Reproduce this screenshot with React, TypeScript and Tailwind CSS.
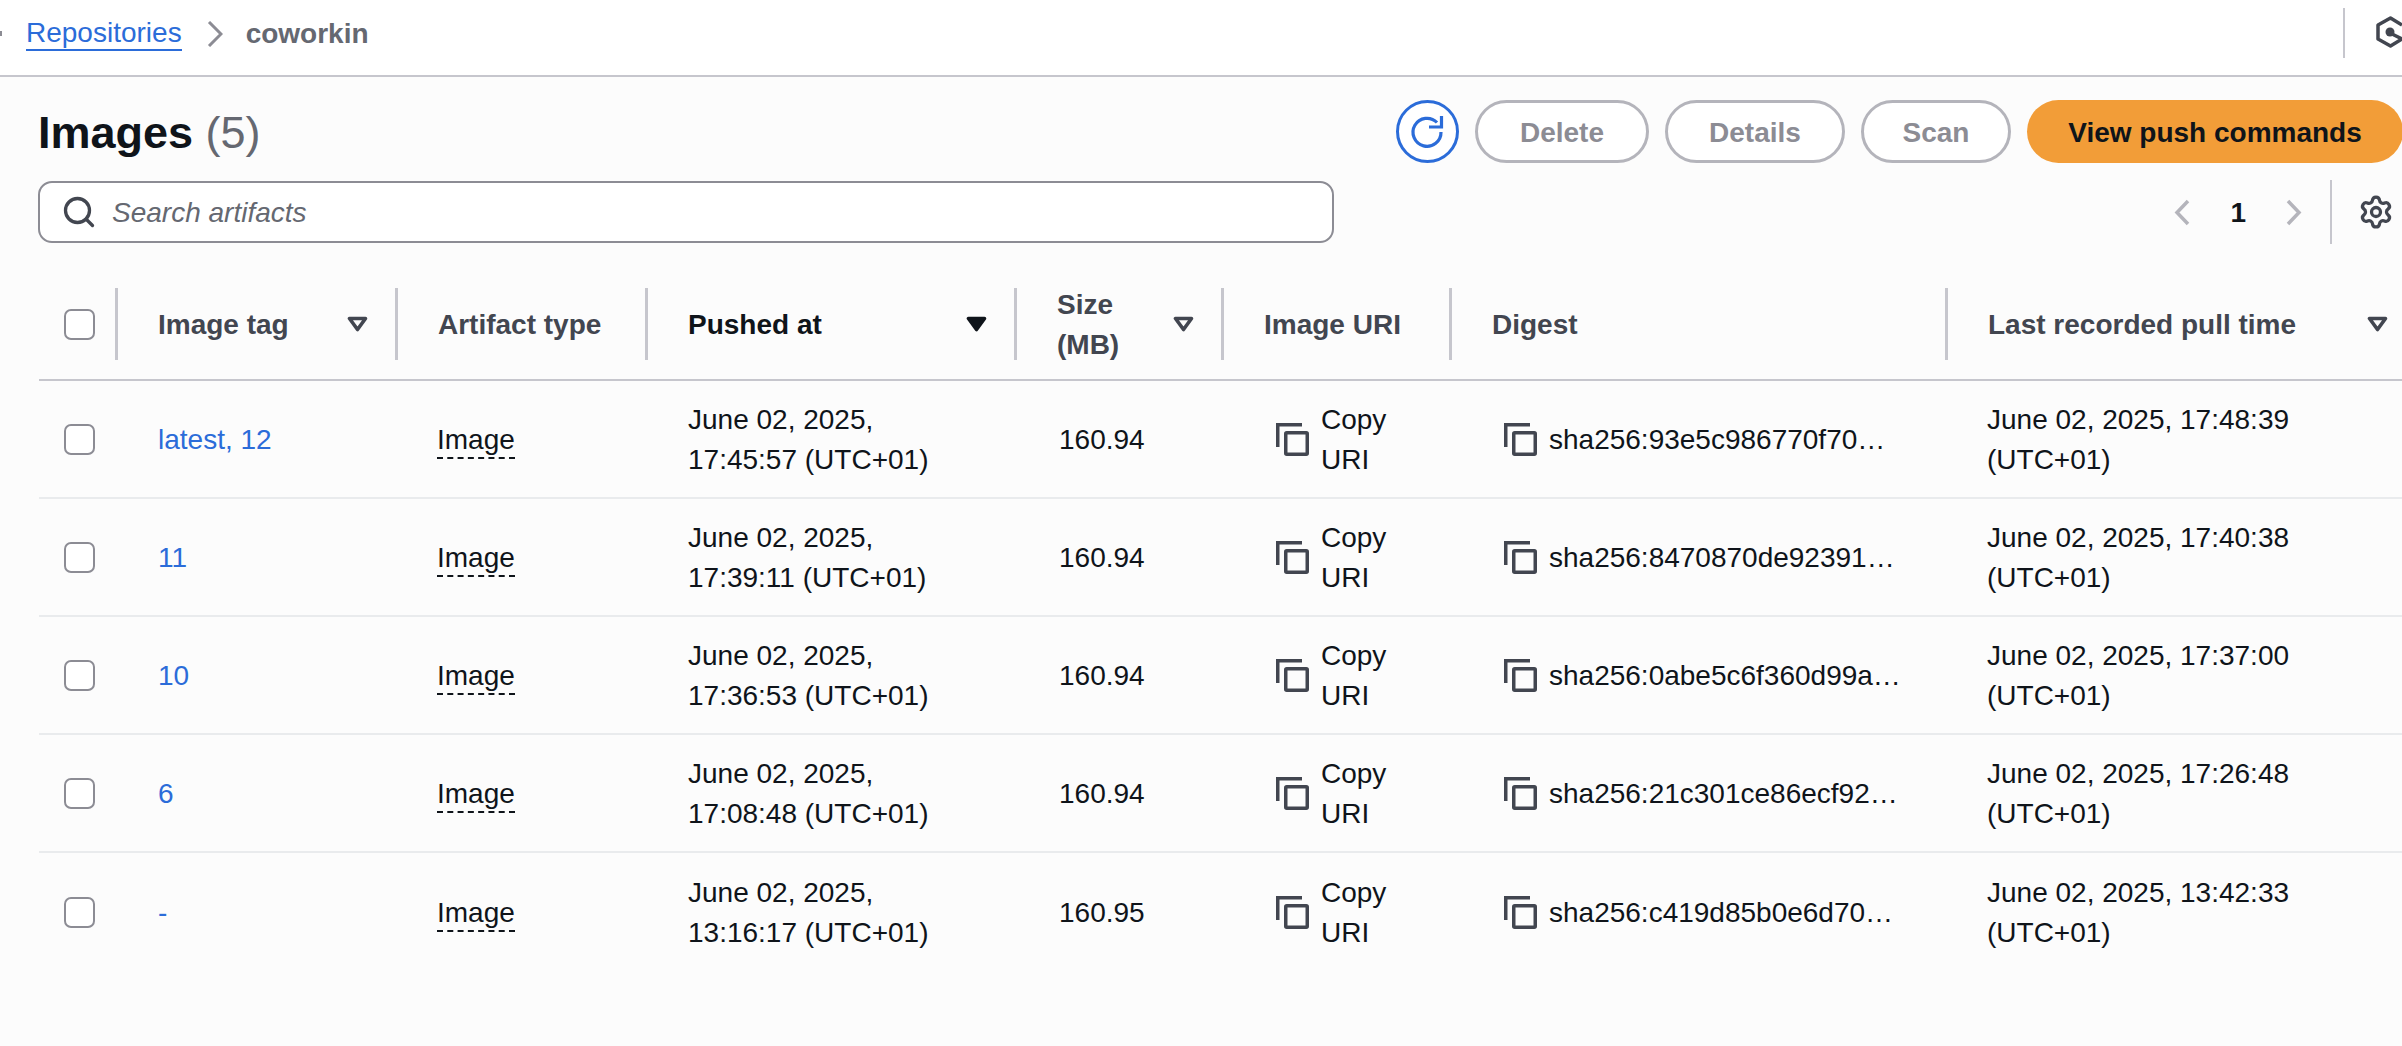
import { Search, Settings } from "lucide-react"

type Row = {
  tag: string
  pushedDate: string
  pushedTime: string
  size: string
  digest: string
  pullDate: string
  pullTime: string
}

const rows: Row[] = [
  {
    tag: "latest, 12",
    pushedDate: "June 02, 2025,",
    pushedTime: "17:45:57 (UTC+01)",
    size: "160.94",
    digest: "sha256:93e5c986770f70…",
    pullDate: "June 02, 2025, 17:48:39",
    pullTime: "(UTC+01)",
  },
  {
    tag: "11",
    pushedDate: "June 02, 2025,",
    pushedTime: "17:39:11 (UTC+01)",
    size: "160.94",
    digest: "sha256:8470870de92391…",
    pullDate: "June 02, 2025, 17:40:38",
    pullTime: "(UTC+01)",
  },
  {
    tag: "10",
    pushedDate: "June 02, 2025,",
    pushedTime: "17:36:53 (UTC+01)",
    size: "160.94",
    digest: "sha256:0abe5c6f360d99a…",
    pullDate: "June 02, 2025, 17:37:00",
    pullTime: "(UTC+01)",
  },
  {
    tag: "6",
    pushedDate: "June 02, 2025,",
    pushedTime: "17:08:48 (UTC+01)",
    size: "160.94",
    digest: "sha256:21c301ce86ecf92…",
    pullDate: "June 02, 2025, 17:26:48",
    pullTime: "(UTC+01)",
  },
  {
    tag: "-",
    pushedDate: "June 02, 2025,",
    pushedTime: "13:16:17 (UTC+01)",
    size: "160.95",
    digest: "sha256:c419d85b0e6d70…",
    pullDate: "June 02, 2025, 13:42:33",
    pullTime: "(UTC+01)",
  },
]

const gridCols =
  "grid grid-cols-[76px_280px_250px_369px_207px_228px_496px_470px]"

function CopyIcon() {
  return (
    <svg width="33" height="33" viewBox="0 0 33 33" fill="none" className="shrink-0">
      <path d="M1.75 24V1.75H26" stroke="#424650" strokeWidth="3.5" />
      <rect x="9.75" y="9.75" width="21.5" height="21.5" rx="1" stroke="#424650" strokeWidth="3.5" />
    </svg>
  )
}

function Caret({ filled = false }: { filled?: boolean }) {
  return (
    <svg width="21" height="16" viewBox="0 0 21 16" className="shrink-0">
      <path
        d="M2.5 2.5H18.5L10.5 13.5Z"
        fill={filled ? "#0f141a" : "none"}
        stroke={filled ? "#0f141a" : "#424650"}
        strokeWidth="3.6"
        strokeLinejoin="round"
      />
    </svg>
  )
}

function Chevron({ left = false }: { left?: boolean }) {
  return (
    <svg width="16" height="27" viewBox="0 0 16 27" fill="none">
      <path
        d={left ? "M14 2L3 13.5L14 25" : "M2 2L13 13.5L2 25"}
        stroke="#b4b4bb"
        strokeWidth="3.5"
      />
    </svg>
  )
}

function Checkbox() {
  return <span className="block size-[31px] rounded-[7px] border-2 border-[#8c8c94] bg-white" />
}

function HeaderCell({
  children,
  caret,
  strong = false,
}: {
  children: React.ReactNode
  caret?: "filled" | "hollow"
  strong?: boolean
}) {
  return (
    <div
      className={`flex h-[72px] items-center justify-between border-l-[3px] border-[#c6c6cd] pr-[27px] pl-[40px] leading-[40px] font-bold ${
        strong ? "text-[#0f141a]" : "text-[#424650]"
      }`}
    >
      <span className="pt-[2px]">{children}</span>
      {caret ? <Caret filled={caret === "filled"} /> : null}
    </div>
  )
}

function ImageRow({ row }: { row: Row }) {
  return (
    <div className={`${gridCols} h-[118px] items-center border-b-2 border-[#e9ebed] leading-[40px] text-[#0f141a]`}>
      <div className="pl-[25px]">
        <Checkbox />
      </div>
      <div className="pt-[2px] pl-[43px] text-[#2b6cd9]">{row.tag}</div>
      <div className="pt-[2px] pl-[42px]">
        <span className="inline-block border-b-2 border-dashed border-[#0f141a] leading-[34px]">Image</span>
      </div>
      <div className="pt-[2px] pl-[43px]">
        <div>{row.pushedDate}</div>
        <div>{row.pushedTime}</div>
      </div>
      <div className="pt-[2px] pl-[45px]">{row.size}</div>
      <div className="flex items-center gap-3 pl-[55px]">
        <CopyIcon />
        <div className="pt-[2px]">
          <div>Copy</div>
          <div>URI</div>
        </div>
      </div>
      <div className="flex items-center gap-3 pl-[55px]">
        <CopyIcon />
        <span className="pt-[2px] whitespace-nowrap">{row.digest}</span>
      </div>
      <div className="pt-[2px] pl-[42px]">
        <div className="whitespace-nowrap">{row.pullDate}</div>
        <div>{row.pullTime}</div>
      </div>
    </div>
  )
}

export default function App() {
  return (
    <div className="h-[1046px] w-[2402px] overflow-hidden bg-[#fcfcfc] font-['Liberation_Sans',Arial,sans-serif] text-[28px]">
      <header className="relative flex h-[77px] items-center border-b-2 border-[#c6c6cd] bg-white pb-[7px] pl-[26px]">
        <span className="absolute top-[31px] left-0 h-[5px] w-[2px] bg-[#8c8c94]" />
        <a className="border-b-2 border-[#2b6cd9] leading-[32px] text-[#2b6cd9]">Repositories</a>
        <svg width="16" height="26" viewBox="0 0 16 26" fill="none" className="mr-[23px] ml-[25px]">
          <path d="M2 1L14 13L2 25" stroke="#8c8c94" strokeWidth="3" />
        </svg>
        <span className="font-bold text-[#656871]">coworkin</span>
        <div className="absolute top-[8px] left-[2343px] h-[50px] w-[2px] bg-[#c6c6cd]" />
        <svg width="30" height="32" viewBox="0 0 30 32" fill="none" className="absolute top-[16px] left-[2376px]">
          <path
            d="M26 9L14.5 2L2 9V23L14.5 30L26 23L14 17"
            stroke="#424650"
            strokeWidth="3.5"
            strokeLinejoin="round"
          />
          <circle cx="14" cy="16" r="4.5" fill="#424650" />
        </svg>
      </header>

      <div className="mt-[23px] flex h-[63px] w-[2403px] items-center justify-between pl-[38px]">
        <h1 className="pt-[2px] text-[45px] font-bold text-[#0f141a]">
          Images <span className="font-normal text-[#656871]">(5)</span>
        </h1>
        <div className="flex items-center gap-[16px]">
          <button className="size-[63px] rounded-full border-[3px] border-[#2b6cd9] bg-white">
            <svg width="57" height="57" viewBox="0 0 57 57" fill="none">
              <path d="M38 19.5A14 14 0 1 0 42 29" stroke="#2b6cd9" strokeWidth="3.2" />
              <path d="M42.5 13V24H30" stroke="#2b6cd9" strokeWidth="3.2" />
            </svg>
          </button>
          <button className="h-[63px] w-[174px] rounded-full border-[3px] border-[#b4b4bb] bg-white pt-[2px] font-bold text-[#8c8c94]">
            Delete
          </button>
          <button className="h-[63px] w-[180px] rounded-full border-[3px] border-[#b4b4bb] bg-white pt-[2px] font-bold text-[#8c8c94]">
            Details
          </button>
          <button className="h-[63px] w-[150px] rounded-full border-[3px] border-[#b4b4bb] bg-white pt-[2px] font-bold text-[#8c8c94]">
            Scan
          </button>
          <button className="h-[63px] w-[376px] rounded-full bg-[#f29d38] pt-[2px] font-bold text-[#0f141a]">
            View push commands
          </button>
        </div>
      </div>

      <div className="mt-[17px] flex h-[64px] items-center justify-between pr-[8px] pl-[38px]">
        <div className="flex h-[62px] w-[1296px] items-center rounded-[14px] border-2 border-[#8c8c94] bg-white pl-[21px]">
          <Search size={36} strokeWidth={2.2} color="#424650" className="shrink-0" />
          <span className="ml-[15px] pt-[2px] text-[#656871] italic">Search artifacts</span>
        </div>
        <div className="flex items-center">
          <Chevron left />
          <span className="mx-[40px] pt-[2px] font-bold text-[#0f141a]">1</span>
          <Chevron />
          <div className="mr-[26px] ml-[28px] h-[64px] w-[2px] bg-[#c6c6cd]" />
          <Settings size={36} strokeWidth={2.2} color="#424650" />
        </div>
      </div>

      <div className="mt-[44px] ml-[39px] w-[2377px]">
        <div className={`${gridCols} border-b-2 border-[#c6c6cd] pb-[19px]`}>
          <div className="flex h-[72px] items-center pl-[25px]">
            <Checkbox />
          </div>
          <HeaderCell caret="hollow">Image tag</HeaderCell>
          <HeaderCell>Artifact type</HeaderCell>
          <HeaderCell caret="filled" strong>
            Pushed at
          </HeaderCell>
          <HeaderCell caret="hollow">
            Size
            <br />
            (MB)
          </HeaderCell>
          <HeaderCell>Image URI</HeaderCell>
          <HeaderCell>Digest</HeaderCell>
          <HeaderCell caret="hollow">Last recorded pull time</HeaderCell>
        </div>
        {rows.map((row, i) => (
          <div key={row.digest} className={i === rows.length - 1 ? "[&>div]:border-b-0" : ""}>
            <ImageRow row={row} />
          </div>
        ))}
      </div>
    </div>
  )
}
